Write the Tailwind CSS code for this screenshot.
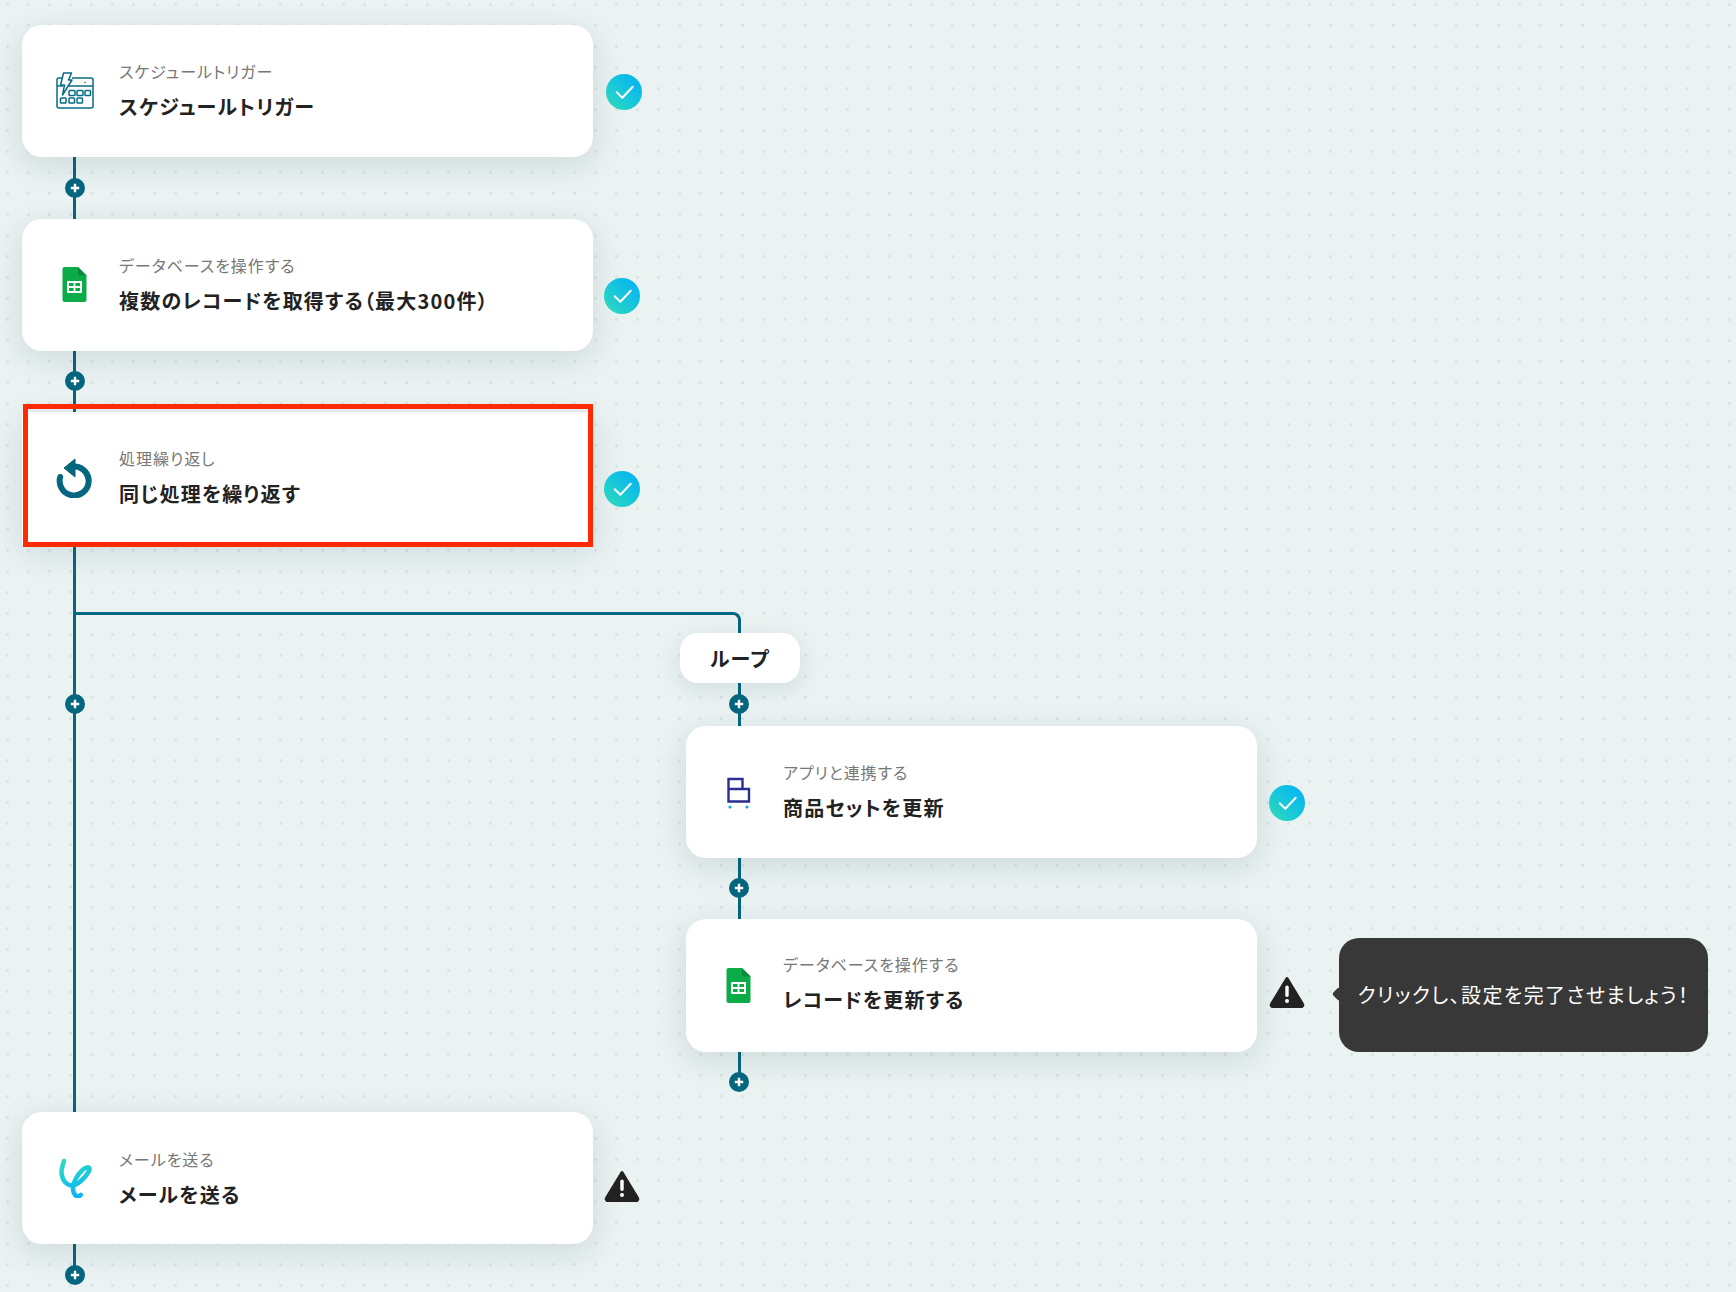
<!DOCTYPE html>
<html lang="ja">
<head>
<meta charset="utf-8">
<title>Flow</title>
<script src="https://cdn.jsdelivr.net/npm/@tailwindcss/browser@4"></script>
</head>
<body class="m-0">
<svg width="0" height="0" class="absolute">
  <defs>
    <symbol id="plus" viewBox="0 0 20 20"><path d="M5.800 10h8.400M10 5.800v8.400" stroke="#fff" stroke-width="2.400"/></symbol>
    <symbol id="check" viewBox="0 0 36 36"><path d="M10.700 18.300l5.600 5.400L26.700 12.700" fill="none" stroke="#fff" stroke-width="2" stroke-linecap="round" stroke-linejoin="round"/></symbol>
    <symbol id="warn" viewBox="0 0 36 32"><path d="M18 2.500L33.500 28a1.600 1.600 0 0 1-1.400 2.500H3.900A1.600 1.600 0 0 1 2.500 28z" fill="#222" stroke="#222" stroke-width="3" stroke-linejoin="round"/><rect x="16.300" y="9.500" width="3.400" height="11.500" rx="1.700" fill="#fff"/><circle cx="18" cy="25" r="2" fill="#fff"/></symbol>
    <symbol id="sheet" viewBox="0 0 40 40"><path d="M9.500 2h13.500l8.500 8.500V35a2 2 0 0 1-2 2h-20a2 2 0 0 1-2-2V4a2 2 0 0 1 2-2z" fill="#0bac48"/><path d="M23 2l8.500 8.500H25a2 2 0 0 1-2-2z" fill="#0a8a3c"/><path d="M12 16h15v12H12z" fill="#fff"/><path d="M14 18h4.600v3H14zM20.400 18H25v3h-4.600zM14 23h4.600v3H14zM20.400 23H25v3h-4.600z" fill="#0bac48"/></symbol>
    <linearGradient id="lark" gradientUnits="userSpaceOnUse" x1="10" y1="4" x2="22" y2="40"><stop offset="0" stop-color="#2fd8c2"/><stop offset="1" stop-color="#08b4fa"/></linearGradient>
  </defs>
</svg>

<main class="relative w-[1736px] h-[1292px] overflow-hidden bg-[#eaf2f2] bg-[radial-gradient(circle_at_7.5px_4.5px,#d8e3e3_1.1px,transparent_1.8px)] bg-size-[21px_21px] font-['Noto_Sans_CJK_JP','Noto_Sans',sans-serif] [font-feature-settings:'palt']">

  <!-- connector lines -->
  <div class="absolute left-[73px] top-[157px] w-[3px] h-[62px] bg-[#05677f]"></div>
  <div class="absolute left-[73px] top-[351px] w-[3px] h-[61px] bg-[#05677f]"></div>
  <div class="absolute left-[73px] top-[544px] w-[3px] h-[568px] bg-[#05677f]"></div>
  <div class="absolute left-[74px] top-[612px] w-[667px] h-[24px] border-t-[3px] border-r-[3px] border-[#05677f] rounded-tr-lg"></div>
  <div class="absolute left-[738px] top-[683px] w-[3px] h-[43px] bg-[#05677f]"></div>
  <div class="absolute left-[738px] top-[858px] w-[3px] h-[61px] bg-[#05677f]"></div>
  <div class="absolute left-[738px] top-[1052px] w-[3px] h-[30px] bg-[#05677f]"></div>
  <div class="absolute left-[73px] top-[1244px] w-[3px] h-[31px] bg-[#05677f]"></div>

  <!-- add buttons -->
  <button class="absolute left-[65px] top-[178px] size-5 rounded-full bg-[#05677f]"><svg class="size-5"><use href="#plus"/></svg></button>
  <button class="absolute left-[65px] top-[371px] size-5 rounded-full bg-[#05677f]"><svg class="size-5"><use href="#plus"/></svg></button>
  <button class="absolute left-[65px] top-[694px] size-5 rounded-full bg-[#05677f]"><svg class="size-5"><use href="#plus"/></svg></button>
  <button class="absolute left-[729px] top-[694px] size-5 rounded-full bg-[#05677f]"><svg class="size-5"><use href="#plus"/></svg></button>
  <button class="absolute left-[729px] top-[878px] size-5 rounded-full bg-[#05677f]"><svg class="size-5"><use href="#plus"/></svg></button>
  <button class="absolute left-[729px] top-[1072px] size-5 rounded-full bg-[#05677f]"><svg class="size-5"><use href="#plus"/></svg></button>
  <button class="absolute left-[65px] top-[1265px] size-5 rounded-full bg-[#05677f]"><svg class="size-5"><use href="#plus"/></svg></button>

  <!-- node 1 -->
  <section class="absolute left-[22px] top-[25px] w-[571px] h-[132px] flex items-center rounded-[20px] bg-white shadow-[0_8px_32px_rgba(0,50,60,0.12)]">
    <svg class="ml-[33px] size-10 shrink-0" viewBox="0 0 40 40" fill="none" stroke="#0a6c85" stroke-width="1.500" stroke-linejoin="round">
      <path d="M10.500 7H4a2 2 0 0 0-2 2v26a2 2 0 0 0 2 2h32a2 2 0 0 0 2-2V9a2 2 0 0 0-2-2H17M2 15h6M14 15h24"/>
      <path d="M8.500 2h8l-3 7h3.500L7.500 24l2-10H5.500z" fill="#fff"/>
      <circle cx="30" cy="11.500" r="0.800" fill="#0a6c85" stroke="none"/>
      <rect x="14" y="19.500" width="6" height="5" rx="0.800"/><rect x="22" y="19.500" width="6" height="5" rx="0.800"/><rect x="30" y="19.500" width="5.500" height="5" rx="0.800"/>
      <rect x="5.500" y="27" width="5.500" height="5" rx="0.800"/><rect x="14" y="27" width="5.500" height="5" rx="0.800"/><rect x="22" y="27" width="5.500" height="5" rx="0.800"/>
    </svg>
    <div class="ml-[24px] pb-1">
      <p class="text-base leading-6 tracking-[0.06em] text-[#777]">スケジュールトリガー</p>
      <h2 class="mt-3 text-xl leading-6 tracking-[0.06em] font-bold text-[#222]">スケジュールトリガー</h2>
    </div>
  </section>
  <svg class="absolute left-[606px] top-[74px] size-9 rounded-full bg-linear-to-tr from-[#30dcb8] to-[#08aef8]"><use href="#check"/></svg>

  <!-- node 2 -->
  <section class="absolute left-[22px] top-[219px] w-[571px] h-[132px] flex items-center rounded-[20px] bg-white shadow-[0_8px_32px_rgba(0,50,60,0.12)]">
    <svg class="ml-[33px] size-10 shrink-0"><use href="#sheet"/></svg>
    <div class="ml-[24px] pb-1">
      <p class="text-base leading-6 tracking-[0.06em] text-[#777]">データベースを操作する</p>
      <h2 class="mt-3 text-xl leading-6 tracking-[0.06em] font-bold text-[#222]">複数のレコードを取得する（最大300件）</h2>
    </div>
  </section>
  <svg class="absolute left-[604px] top-[278px] size-9 rounded-full bg-linear-to-tr from-[#30dcb8] to-[#08aef8]"><use href="#check"/></svg>

  <!-- node 3 -->
  <section class="absolute left-[22px] top-[412px] w-[571px] h-[132px] flex items-center bg-white shadow-[0_8px_32px_rgba(0,50,60,0.12)]">
    <svg class="ml-[33px] size-10 shrink-0" viewBox="0 0 40 40" fill="none">
      <path d="M20 8.500A14.500 14.500 0 1 1 5.200 19" stroke="#05677f" stroke-width="6" stroke-linecap="round"/>
      <path d="M9 10L20 1v18z" fill="#05677f" stroke="#05677f" stroke-width="1" stroke-linejoin="round"/>
    </svg>
    <div class="ml-[24px] pb-1">
      <p class="text-base leading-6 tracking-[0.06em] text-[#777]">処理繰り返し</p>
      <h2 class="mt-3 text-xl leading-6 tracking-[0.06em] font-bold text-[#222]">同じ処理を繰り返す</h2>
    </div>
  </section>
  <div class="absolute left-[23px] top-[404px] w-[570px] h-[143px] border-[5px] border-[#ff2a00]"></div>
  <svg class="absolute left-[604px] top-[471px] size-9 rounded-full bg-linear-to-tr from-[#30dcb8] to-[#08aef8]"><use href="#check"/></svg>

  <!-- loop label -->
  <div class="absolute left-[680px] top-[633px] w-[120px] h-[50px] pt-[2px] flex items-center justify-center rounded-[18px] bg-white text-xl tracking-[0.06em] font-bold text-[#222] shadow-[0_6px_24px_rgba(0,50,60,0.10)]">ループ</div>

  <!-- node 4 -->
  <section class="absolute left-[686px] top-[726px] w-[571px] h-[132px] flex items-center rounded-[20px] bg-white shadow-[0_8px_32px_rgba(0,50,60,0.12)]">
    <svg class="ml-[33px] size-10 shrink-0" viewBox="0 0 40 40" fill="none">
      <path d="M9.500 7h14v10h-14zM9.500 17h20.500v12.500H9.500z" stroke="#2b2e8f" stroke-width="2.400"/>
      <circle cx="11" cy="35" r="1.600" fill="#1aa5f0"/>
      <circle cx="28" cy="35" r="1.600" fill="#1aa5f0"/>
    </svg>
    <div class="ml-[24px] pb-1">
      <p class="text-base leading-6 tracking-[0.06em] text-[#777]">アプリと連携する</p>
      <h2 class="mt-3 text-xl leading-6 tracking-[0.06em] font-bold text-[#222]">商品セットを更新</h2>
    </div>
  </section>
  <svg class="absolute left-[1269px] top-[785px] size-9 rounded-full bg-linear-to-tr from-[#30dcb8] to-[#08aef8]"><use href="#check"/></svg>

  <!-- node 5 -->
  <section class="absolute left-[686px] top-[919px] w-[571px] h-[133px] flex items-center rounded-[20px] bg-white shadow-[0_8px_32px_rgba(0,50,60,0.12)]">
    <svg class="ml-[33px] size-10 shrink-0"><use href="#sheet"/></svg>
    <div class="ml-[24px] pb-[7px]">
      <p class="text-base leading-6 tracking-[0.06em] text-[#777]">データベースを操作する</p>
      <h2 class="mt-3 text-xl leading-6 tracking-[0.06em] font-bold text-[#222]">レコードを更新する</h2>
    </div>
  </section>
  <svg class="absolute left-[1269px] top-[976px] w-9 h-8"><use href="#warn"/></svg>

  <!-- tooltip -->
  <div class="absolute left-[1339px] top-[938px] w-[369px] h-[114px] flex items-center justify-center rounded-[20px] bg-[#383838] text-xl tracking-[0.07em] text-white">
    <span class="absolute left-[-5px] top-[51px] size-[10px] rotate-45 rounded-[2px] bg-[#383838]"></span>
    <span class="relative">クリックし、設定を完了させましょう！</span>
  </div>

  <!-- node 6 -->
  <section class="absolute left-[22px] top-[1112px] w-[571px] h-[132px] flex items-center rounded-[20px] bg-white shadow-[0_8px_32px_rgba(0,50,60,0.12)]">
    <svg class="ml-[33px] size-10 shrink-0" viewBox="0 0 40 40" fill="none">
      <path d="M9 3C7 9 6 13 6.700 16C7.500 23 12 28 18 27.500C25 26 33 16 34.500 11.500C35 8 30 9 27 12.500C22 17 17.500 25 18 31C18.500 37 22 40 25.700 37" stroke="url(#lark)" stroke-width="4.500" stroke-linecap="round" stroke-linejoin="round"/>
    </svg>
    <div class="ml-[24px] pb-[2px]">
      <p class="text-base leading-6 tracking-[0.06em] text-[#777]">メールを送る</p>
      <h2 class="mt-3 text-xl leading-6 tracking-[0.06em] font-bold text-[#222]">メールを送る</h2>
    </div>
  </section>
  <svg class="absolute left-[604px] top-[1170px] w-9 h-8"><use href="#warn"/></svg>
</main>
</body>
</html>
